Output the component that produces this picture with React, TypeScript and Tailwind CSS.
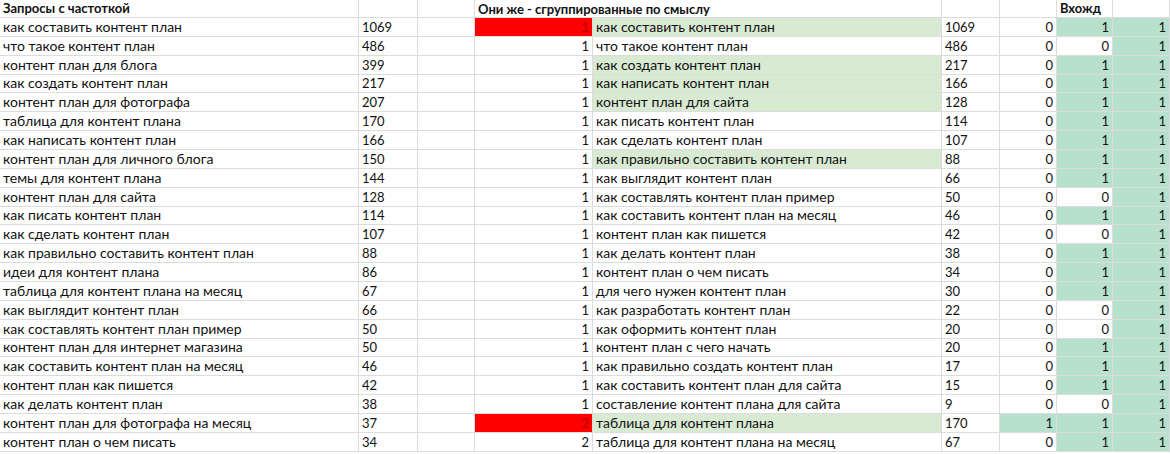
type Row = {
  q: string;
  f: number;
  g: number;
  gRed?: boolean;
  q2: string;
  q2Green?: boolean;
  f2: number;
  a: number;
  b: number;
};

const ROWS: Row[] = [
  { q: 'как составить контент план', f: 1069, g: 1, gRed: true, q2: 'как составить контент план', q2Green: true, f2: 1069, a: 0, b: 1 },
  { q: 'что такое контент план', f: 486, g: 1, q2: 'что такое контент план', f2: 486, a: 0, b: 0 },
  { q: 'контент план для блога', f: 399, g: 1, q2: 'как создать контент план', q2Green: true, f2: 217, a: 0, b: 1 },
  { q: 'как создать контент план', f: 217, g: 1, q2: 'как написать контент план', q2Green: true, f2: 166, a: 0, b: 1 },
  { q: 'контент план для фотографа', f: 207, g: 1, q2: 'контент план для сайта', q2Green: true, f2: 128, a: 0, b: 1 },
  { q: 'таблица для контент плана', f: 170, g: 1, q2: 'как писать контент план', f2: 114, a: 0, b: 1 },
  { q: 'как написать контент план', f: 166, g: 1, q2: 'как сделать контент план', f2: 107, a: 0, b: 1 },
  { q: 'контент план для личного блога', f: 150, g: 1, q2: 'как правильно составить контент план', q2Green: true, f2: 88, a: 0, b: 1 },
  { q: 'темы для контент плана', f: 144, g: 1, q2: 'как выглядит контент план', f2: 66, a: 0, b: 1 },
  { q: 'контент план для сайта', f: 128, g: 1, q2: 'как составлять контент план пример', f2: 50, a: 0, b: 0 },
  { q: 'как писать контент план', f: 114, g: 1, q2: 'как составить контент план на месяц', f2: 46, a: 0, b: 1 },
  { q: 'как сделать контент план', f: 107, g: 1, q2: 'контент план как пишется', f2: 42, a: 0, b: 0 },
  { q: 'как правильно составить контент план', f: 88, g: 1, q2: 'как делать контент план', f2: 38, a: 0, b: 1 },
  { q: 'идеи для контент плана', f: 86, g: 1, q2: 'контент план о чем писать', f2: 34, a: 0, b: 1 },
  { q: 'таблица для контент плана на месяц', f: 67, g: 1, q2: 'для чего нужен контент план', f2: 30, a: 0, b: 1 },
  { q: 'как выглядит контент план', f: 66, g: 1, q2: 'как разработать контент план', f2: 22, a: 0, b: 0 },
  { q: 'как составлять контент план пример', f: 50, g: 1, q2: 'как оформить контент план', f2: 20, a: 0, b: 0 },
  { q: 'контент план для интернет магазина', f: 50, g: 1, q2: 'контент план с чего начать', f2: 20, a: 0, b: 1 },
  { q: 'как составить контент план на месяц', f: 46, g: 1, q2: 'как правильно создать контент план', f2: 17, a: 0, b: 1 },
  { q: 'контент план как пишется', f: 42, g: 1, q2: 'как составить контент план для сайта', f2: 15, a: 0, b: 1 },
  { q: 'как делать контент план', f: 38, g: 1, q2: 'составление контент плана для сайта', f2: 9, a: 0, b: 0 },
  { q: 'контент план для фотографа на месяц', f: 37, g: 2, gRed: true, q2: 'таблица для контент плана', q2Green: true, f2: 170, a: 1, b: 1 },
  { q: 'контент план о чем писать', f: 34, g: 2, q2: 'таблица для контент плана на месяц', f2: 67, a: 0, b: 1 },
];

const cell = 'flex items-end whitespace-nowrap border-r border-b border-[#dcdcdc] pb-[1px] leading-[16px]';
const left = `${cell} pl-[3px]`;
const num = `${left} text-[13px]`;
const right = `${cell} justify-end pr-[3px] text-[13px]`;

export default function App() {
  return (
    <div className="w-[1170px] h-[454px] overflow-hidden bg-white text-[14px] text-[#111] font-['Lato','Liberation_Sans',sans-serif]">
      <div className="grid grid-cols-[359px_59px_57px_118px_349px_58px_57px_56px_57px] auto-rows-[18.87px] grid-rows-[18px]">
        {/* header row */}
        <div className={`${left} font-bold text-[13px] pb-0`}>Запросы с частоткой</div>
        <div className={left} />
        <div className={left} />
        <div className="flex items-end whitespace-nowrap border-b border-[#dcdcdc] pl-[3px] leading-[16px] font-bold text-[13px]">
          Они же - сгруппированные по смыслу
        </div>
        <div className={left} />
        <div className={left} />
        <div className={left} />
        <div className={`${left} font-bold text-[13px] pb-0`}>Вхожд</div>
        <div className={left} />

        {ROWS.map((r, i) => (
          <div key={i} className="contents">
            <div className={left}>{r.q}</div>
            <div className={num}>{r.f}</div>
            <div className={left} />
            <div className={`${right} ${r.gRed ? 'bg-[#ff0000] text-[#b00000]' : ''}`}>{r.g}</div>
            <div className={`${left} ${r.q2Green ? 'bg-[#d9ead3]' : ''}`}>{r.q2}</div>
            <div className={num}>{r.f2}</div>
            <div className={`${right} ${r.a === 1 ? 'bg-[#b7e1cd]' : ''}`}>{r.a}</div>
            <div className={`${right} ${r.b === 1 ? 'bg-[#b7e1cd]' : ''}`}>{r.b}</div>
            <div className={`${right} bg-[#b7e1cd]`}>1</div>
          </div>
        ))}
      </div>
    </div>
  );
}
